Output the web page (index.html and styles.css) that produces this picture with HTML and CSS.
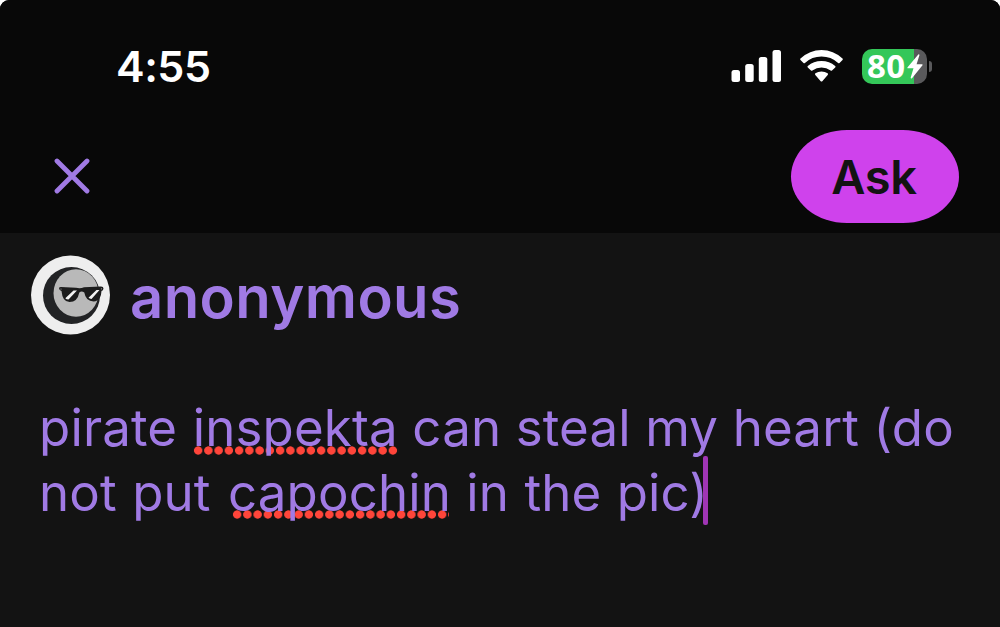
FILE: index.html
```html
<!DOCTYPE html>
<html lang="en">
<head>
    <meta charset="UTF-8">
    <meta name="viewport" content="width=device-width, initial-scale=1.0">
    <title>Ask</title>
    <link rel="stylesheet" href="styles.css">
</head>
<body>
    <div class="screen">
        <header class="top">
            <!-- Status bar -->
            <div class="status-bar">
                <span class="time">4:55</span>
                <div class="status-icons">
                    <svg class="signal" width="50" height="32" viewBox="0 0 50 32" fill="#fff">
                        <rect x="0.5" y="20" width="8.5" height="12" rx="2.5"/>
                        <rect x="14.2" y="14" width="8.5" height="18" rx="2.5"/>
                        <rect x="27.8" y="7" width="8.5" height="25" rx="2.5"/>
                        <rect x="41.5" y="0" width="8.5" height="32" rx="2.5"/>
                    </svg>
                    <svg class="wifi" width="43" height="32" viewBox="0 0 43 32" fill="#fff">
                        <path d="M.5 8.6Q9.500 0 21.500 0T42.500 8.600Q43.200 9.300 42.500 10L39.500 13Q38.800 13.600 38.100 13Q31 6.600 21.500 6.600T4.900 13Q4.200 13.600 3.500 13L.5 10Q-.2 9.300.5 8.600Z"/>
                        <path d="M7.800 15.900Q13.600 10.900 21.500 10.900T35.200 15.900Q36 16.600 35.200 17.400L32 20.500Q31.400 21.100 30.600 20.500Q26.500 17.400 21.500 17.400T12.400 20.500Q11.600 21.100 11 20.500L7.800 17.400Q7 16.600 7.800 15.900Z"/>
                        <path d="M15.400 23.300Q18 21.600 21.500 21.600T27.600 23.300Q28.500 24 27.700 24.900L22.300 31.200Q21.500 32 20.700 31.200L15.300 24.900Q14.500 24 15.400 23.300Z"/>
                    </svg>
                    <div class="battery">
                        <div class="battery-body">
                            <span class="battery-level">80</span>
                            <svg class="bolt" width="16" height="25" viewBox="0 0 16 25" fill="#fff">
                                <path d="M11.300.6L.6 13.300Q0 14.300 1 14.300H6.500L3.700 23.600Q3.700 25 5 24.200L15.500 11.200Q16 10.200 15 10.200H9.600L12.400 1.200Q12.400-.2 11.300.6Z"/>
                            </svg>
                        </div>
                        <div class="battery-tip"></div>
                    </div>
                </div>
            </div>

            <!-- Close and submit -->
            <div class="actions">
                <button class="close" type="button" aria-label="Close">
                    <svg width="36" height="36" viewBox="0 0 36 36" fill="none" stroke="#a07ae4" stroke-width="4.800" stroke-linecap="round">
                        <path d="M3 3L33 33M33 3L3 33"/>
                    </svg>
                </button>
                <button class="ask" type="button">Ask</button>
            </div>
        </header>

        <main class="composer">
            <div class="author">
                <svg class="avatar" width="80" height="80" viewBox="0 0 80 80">
                    <circle cx="40.500" cy="40" r="39.500" fill="#eee"/>
                    <circle cx="41.500" cy="40.500" r="28.500" fill="#222325"/>
                    <ellipse cx="46" cy="38" rx="22.500" ry="23.800" fill="#b9b9b9"/>
                    <!-- Sunglasses -->
                    <path d="M29 33.200Q29 32 31 32L46 32.800Q50.500 33.700 54 32.300L71 31.500Q73.500 31.500 73.500 33.500Q73.300 35.600 71.500 36Q71 45 65.500 46.300Q56 47.500 54.300 37.500Q51.500 35.500 49.300 37.500Q47.500 47 39.500 47Q32.500 47 31.500 36Q29.200 35.300 29 33.200Z" fill="#1c1c1c"/>
                    <path d="M43.500 35.500H47L38.500 44.500Q36.500 44.500 35.300 43.200ZM66.500 35H69.500L61.500 44Q59.500 43.800 58.500 42.700Z" fill="#f3f3f3"/>
                    <circle cx="31" cy="34" r=".6" fill="#aaa"/>
                    <circle cx="71.500" cy="33.800" r=".6" fill="#aaa"/>
                </svg>
                <span class="name">anonymous</span>
            </div>
            <div class="question">
                <div class="line">pirate <span class="misspelled">inspekta</span> can steal my heart (do</div>
                <div class="line last">not put <span class="misspelled inset">capochin</span> in the pic)<span class="caret"></span></div>
            </div>
        </main>
    </div>
</body>
</html>
```
FILE: styles.css
```css
body {
    margin: 0;
    background-color: #fff;
    font-family: Inter, "Liberation Sans", sans-serif;
}
.screen {
    height: 627px;
    overflow: hidden;
    border-radius: 9px 9px 0 0;
    background-color: #131313;
}
.top {
    height: 233px;
    background-color: #080808;
}
.status-bar {
    display: flex;
    justify-content: space-between;
    align-items: center;
    height: 60px;
    padding: 36px 68px 0 116px;
}
.time {
    color: #fff;
    font-size: 43px;
    font-weight: 600;
    line-height: 60px;
    letter-spacing: -0.5px;
}
.status-icons {
    display: flex;
    align-items: center;
}
.wifi {
    margin-left: 19px;
}
.battery {
    display: flex;
    align-items: center;
    margin-left: 19px;
}
.battery-body {
    display: flex;
    align-items: center;
    box-sizing: border-box;
    width: 65px;
    height: 35px;
    padding-left: 5px;
    border-radius: 10px;
    background: linear-gradient(to right, #34c759 52px, #59595b 52px);
}
.battery-level {
    width: 40px;
    margin-top: -2px;
    color: #fff;
    font-family: "Open Sans", sans-serif;
    font-size: 33px;
    font-weight: 700;
    line-height: 35px;
    letter-spacing: 0.4px;
}
.battery-tip {
    width: 3px;
    height: 11px;
    margin-left: 2px;
    border-radius: 0 4px 4px 0;
    background-color: #59595b;
}
.actions {
    display: flex;
    justify-content: space-between;
    align-items: center;
    padding: 34px 41px 0 54px;
}
button {
    padding: 0;
    border: 0;
    background: none;
    font-family: inherit;
}
.close {
    width: 36px;
    height: 36px;
    margin-bottom: 2px;
}
.close svg {
    display: block;
}
.ask {
    width: 168px;
    height: 93px;
    padding-right: 2px;
    border-radius: 56px / 46.5px;
    background-color: #cf42ec;
    color: #131313;
    font-size: 47px;
    font-weight: 600;
    letter-spacing: -0.3px;
}
.composer {
    padding: 22px 30px 0;
}
.author {
    display: flex;
    align-items: center;
    height: 80px;
}
.name {
    margin: 4px 0 0 20px;
    color: #a07ae4;
    font-size: 58px;
    font-weight: 600;
    line-height: 80px;
    letter-spacing: 0.4px;
}
.question {
    padding: 60px 0 0 9px;
    color: #a07ae4;
    font-size: 51px;
    line-height: 65px;
    letter-spacing: 0.15px;
}
.line {
    height: 65px;
    white-space: nowrap;
}
.last {
    word-spacing: 0.8px;
}
/* Spell check dots */
.misspelled {
    padding-right: 1px;
    margin-left: 1px;
    margin-right: -1px;
    background-image: radial-gradient(circle at center, #ff453a 3.8px, transparent 4.5px);
    background-repeat: repeat-x;
    background-size: 10.26px 9px;
    background-position: 0 calc(100% - 3px);
}
.inset {
    margin-left: 2px;
    background-image: linear-gradient(to right, #131313 4px, transparent 4px), linear-gradient(to right, #131313 3px, transparent 3px), radial-gradient(circle at center, #ff453a 3.8px, transparent 4.5px);
    background-repeat: no-repeat, no-repeat, repeat-x;
    background-size: 4px 9px, 3px 9px, 10.26px 9px;
    background-position: 0 calc(100% - 4px), 100% calc(100% - 4px), 4px calc(100% - 4px);
}
.caret {
    display: inline-block;
    width: 5px;
    height: 69px;
    margin: -8px 0 0 -5px;
    border-radius: 2px;
    background-color: #a035b5;
    vertical-align: -14px;
}
```
